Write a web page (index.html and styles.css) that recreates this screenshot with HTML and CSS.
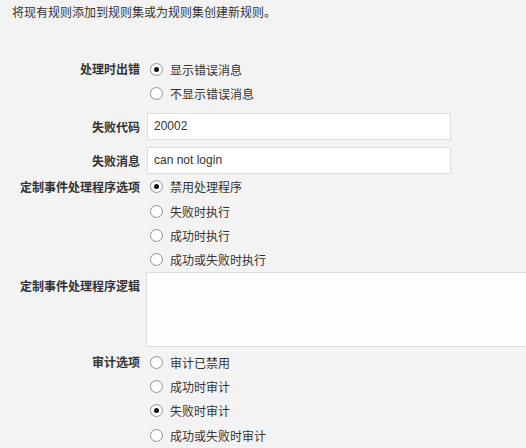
FILE: index.html
```html
<!DOCTYPE html>
<html lang="zh-CN">
<head>
    <meta charset="UTF-8">
    <meta name="viewport" content="width=device-width, initial-scale=1.0">
    <title>规则</title>
    <link rel="stylesheet" href="styles.css">
</head>
<body>
    <p class="intro">将现有规则添加到规则集或为规则集创建新规则。</p>

    <div class="form">
        <div class="field">
            <div class="label">处理时出错</div>
            <div class="options">
                <label class="radio"><span class="dot checked"></span>显示错误消息</label>
                <label class="radio"><span class="dot"></span>不显示错误消息</label>
            </div>
        </div>

        <div class="field field-input">
            <div class="label">失败代码</div>
            <input type="text" class="text-box" value="20002">
        </div>

        <div class="field field-input">
            <div class="label">失败消息</div>
            <input type="text" class="text-box" value="can not login">
        </div>

        <div class="field field-handler">
            <div class="label">定制事件处理程序选项</div>
            <div class="options">
                <label class="radio"><span class="dot checked"></span>禁用处理程序</label>
                <label class="radio"><span class="dot"></span>失败时执行</label>
                <label class="radio"><span class="dot"></span>成功时执行</label>
                <label class="radio"><span class="dot"></span>成功或失败时执行</label>
            </div>
        </div>

        <div class="field field-area">
            <div class="label">定制事件处理程序逻辑</div>
            <textarea class="logic-box"></textarea>
        </div>

        <div class="field field-audit">
            <div class="label">审计选项</div>
            <div class="options">
                <label class="radio"><span class="dot"></span>审计已禁用</label>
                <label class="radio"><span class="dot"></span>成功时审计</label>
                <label class="radio"><span class="dot checked"></span>失败时审计</label>
                <label class="radio"><span class="dot"></span>成功或失败时审计</label>
            </div>
        </div>
    </div>
</body>
</html>
```

FILE: styles.css
```css
body {
    margin: 0;
    background-color: #f3f3f3;
    color: #333;
    font-family: "Noto Sans CJK SC", "Liberation Sans", sans-serif;
    font-size: 12px;
    overflow: hidden;
}

.intro {
    margin: 0 0 37px;
    padding: 4px 0 0 12px;
    line-height: 16px;
}

.field {
    display: flex;
    align-items: flex-start;
}

.label {
    width: 140px;
    flex: none;
    margin-right: 7px;
    text-align: right;
    font-weight: bold;
    line-height: 24.33px;
    color: #333;
}

.options {
    display: flex;
    flex-direction: column;
}

.radio {
    display: flex;
    align-items: center;
    height: 24.33px;
    padding-left: 3px;
}

.dot {
    position: relative;
    flex: none;
    width: 11px;
    height: 11px;
    margin-right: 7px;
    border: 1px solid #929292;
    border-radius: 50%;
    background-color: #fff;
}

.dot.checked::after {
    content: "";
    position: absolute;
    left: 3px;
    top: 3px;
    width: 5px;
    height: 5px;
    border-radius: 50%;
    background-color: #111;
}

.field-input {
    margin-top: 7px;
    align-items: center;
}

.field-input .label {
    line-height: 27px;
}

.text-box {
    box-sizing: border-box;
    flex: none;
    width: 304px;
    height: 27px;
    margin: 0;
    padding: 0 6px;
    font-family: "Liberation Sans", sans-serif;
    font-size: 12px;
    color: #333;
    background-color: #fff;
    border: 1px solid #dedede;
    outline: none;
}

.field-handler {
    margin-top: 1px;
}

.field-area .label {
    padding-top: 2px;
}

.logic-box {
    box-sizing: border-box;
    flex: none;
    width: 400px;
    height: 75px;
    margin: 0 0 0 -1px;
    padding: 0;
    background-color: #fcfdfe;
    border: 1px solid #dcdcdc;
    resize: none;
    outline: none;
}

.field-audit {
    margin-top: 3px;
}
```
